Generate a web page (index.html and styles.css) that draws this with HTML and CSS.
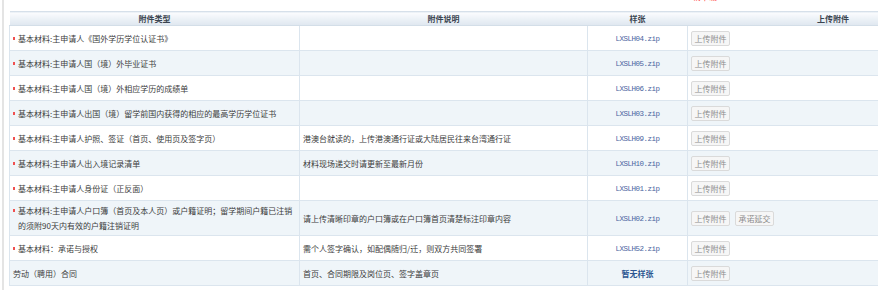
FILE: index.html
```html
<!DOCTYPE html>
<html lang="zh-CN">
<head>
<meta charset="utf-8">
<title>附件</title>
<link rel="stylesheet" href="styles.css">
</head>
<body>
<div class="frame">
  <div class="top"><div class="note">请下载</div></div>
  <table class="att">
    <colgroup>
      <col class="c1"><col class="c2"><col class="c3"><col class="c4">
    </colgroup>
    <thead>
      <tr><th>附件类型</th><th>附件说明</th><th>样张</th><th>上传附件</th></tr>
    </thead>
    <tbody>
      <tr>
        <td class="type"><span class="req"></span><span class="tx">基本材料:主申请人《国外学历学位认证书》</span></td>
        <td class="desc"></td>
        <td class="sample"><a class="file">LXSLH04.zip</a></td>
        <td class="ops"><button class="btn">上传附件</button></td>
      </tr>
      <tr>
        <td class="type"><span class="req"></span><span class="tx">基本材料:主申请人国（境）外毕业证书</span></td>
        <td class="desc"></td>
        <td class="sample"><a class="file">LXSLH05.zip</a></td>
        <td class="ops"><button class="btn">上传附件</button></td>
      </tr>
      <tr>
        <td class="type"><span class="req"></span><span class="tx">基本材料:主申请人国（境）外相应学历的成绩单</span></td>
        <td class="desc"></td>
        <td class="sample"><a class="file">LXSLH06.zip</a></td>
        <td class="ops"><button class="btn">上传附件</button></td>
      </tr>
      <tr>
        <td class="type"><span class="req"></span><span class="tx">基本材料:主申请人出国（境）留学前国内获得的相应的最高学历学位证书</span></td>
        <td class="desc"></td>
        <td class="sample"><a class="file">LXSLH03.zip</a></td>
        <td class="ops"><button class="btn">上传附件</button></td>
      </tr>
      <tr>
        <td class="type"><span class="req"></span><span class="tx">基本材料:主申请人护照、签证（首页、使用页及签字页）</span></td>
        <td class="desc">港澳台就读的，上传港澳通行证或大陆居民往来台湾通行证</td>
        <td class="sample"><a class="file">LXSLH09.zip</a></td>
        <td class="ops"><button class="btn">上传附件</button></td>
      </tr>
      <tr>
        <td class="type"><span class="req"></span><span class="tx">基本材料:主申请人出入境记录清单</span></td>
        <td class="desc">材料现场递交时请更新至最新月份</td>
        <td class="sample"><a class="file">LXSLH10.zip</a></td>
        <td class="ops"><button class="btn">上传附件</button></td>
      </tr>
      <tr>
        <td class="type"><span class="req"></span><span class="tx">基本材料:主申请人身份证（正反面）</span></td>
        <td class="desc"></td>
        <td class="sample"><a class="file">LXSLH01.zip</a></td>
        <td class="ops"><button class="btn">上传附件</button></td>
      </tr>
      <tr class="tall">
        <td class="type"><span class="req"></span><span class="tx">基本材料:主申请人户口簿（首页及本人页）或户籍证明；留学期间户籍已注销<br>的须附90天内有效的户籍注销证明</span></td>
        <td class="desc">请上传清晰印章的户口簿或在户口簿首页清楚标注印章内容</td>
        <td class="sample"><a class="file">LXSLH02.zip</a></td>
        <td class="ops"><button class="btn">上传附件</button><button class="btn">承诺延交</button></td>
      </tr>
      <tr>
        <td class="type"><span class="req"></span><span class="tx">基本材料：承诺与授权</span></td>
        <td class="desc">需个人签字确认，如配偶随归/迁，则双方共同签署</td>
        <td class="sample"><a class="file">LXSLH52.zip</a></td>
        <td class="ops"><button class="btn">上传附件</button></td>
      </tr>
      <tr>
        <td class="type"><span class="tx plain">劳动（聘用）合同</span></td>
        <td class="desc">首页、合同期限及岗位页、签字盖章页</td>
        <td class="sample"><span class="none">暂无样张</span></td>
        <td class="ops"><button class="btn">上传附件</button></td>
      </tr>
    </tbody>
  </table>
</div>
</body>
</html>
```
FILE: styles.css
```css
html, body {
  margin: 0;
  padding: 0;
  background: #fff;
  overflow: hidden;
}
body {
  width: 878px;
  height: 303px;
  font-family: "Noto Sans CJK SC", "Noto Sans", sans-serif;
  font-size: 8px;
  color: #3c3c3c;
}
.frame {
  margin-left: 2px;
  border-left: 2px solid #e4e4e4;
  padding-left: 5px;
  width: 1000px;
  height: 290px;
}
.top {
  height: 11px;
  overflow: hidden;
}
.note {
  margin-top: -8px;
  line-height: 10px;
  padding-left: 684px;
  color: #f33;
  font-size: 8px;
}
.att {
  border-collapse: collapse;
  table-layout: fixed;
  width: 969px;
}
.c1 { width: 290px; }
.c2 { width: 288px; }
.c3 { width: 100px; }
.c4 { width: 291px; }
.att th {
  height: 13px;
  padding: 0;
  font-weight: bold;
  color: #3a4450;
  text-align: center;
  line-height: 13px;
  background: linear-gradient(#fbfcfe, #e9eff5 60%, #dfe7ef);
  border-top: 1px solid #d6e0ea;
  border-bottom: 1px solid #d3dee8;
}
.att td {
  height: 24px;
  padding: 0 3px;
  border: 1px solid #dbe5ee;
  vertical-align: middle;
  line-height: 15px;
}
.att tr.tall td { height: 34px; }
.att tbody tr:nth-child(even) td { background: #eff5f9; }
.type .req {
  float: left;
  width: 2px;
  height: 3px;
  background: #f05050;
  margin-top: 6px;
}
.type .tx {
  display: block;
  margin-left: 5px;
}
.type .tx.plain { margin-left: 0; }
.sample { text-align: center; }
.file {
  font-family: "Liberation Mono", monospace;
  font-size: 7.5px;
  letter-spacing: -0.5px;
  color: #4a64a0;
}
.none {
  color: #2c5590;
  font-weight: bold;
  font-size: 8px;
}
.ops { padding-left: 2px; }
.btn {
  font-family: "Noto Sans CJK SC", sans-serif;
  font-size: 8px;
  line-height: 13px;
  height: 15px;
  width: 39px;
  padding: 0;
  margin: 0 5px 0 0;
  color: #8c8c8c;
  background: #f6f6f6;
  border: 1px solid #dadada;
  border-radius: 2px;
  vertical-align: middle;
}
```
